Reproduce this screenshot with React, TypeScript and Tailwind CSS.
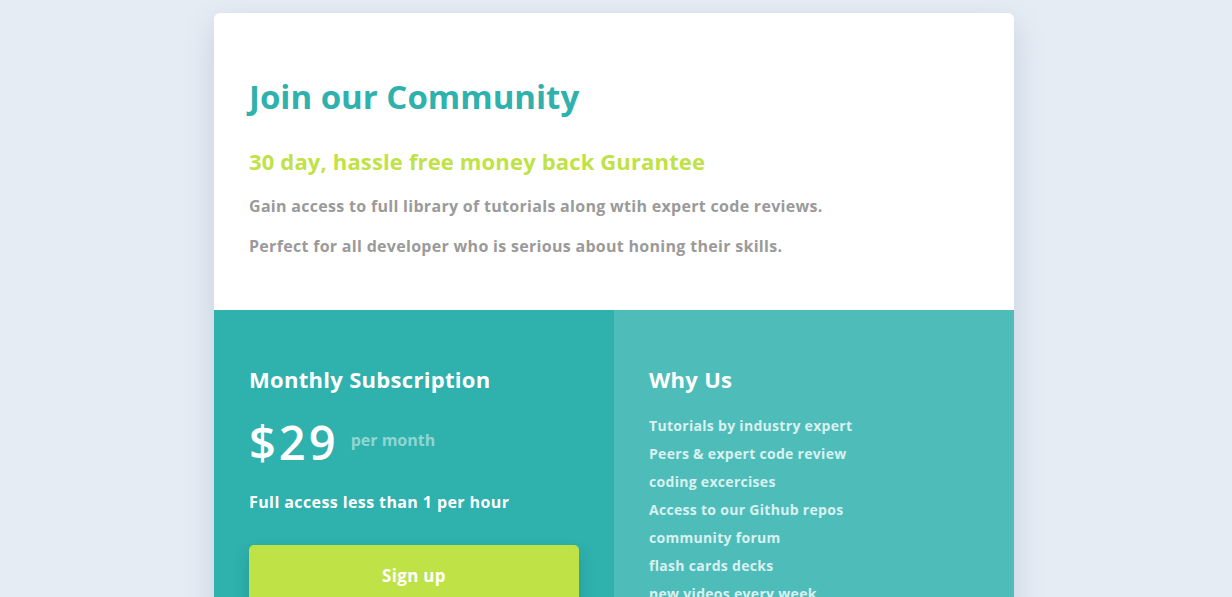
const features = [
  'Tutorials by industry expert',
  'Peers & expert code review',
  'coding excercises',
  'Access to our Github repos',
  'community forum',
  'flash cards decks',
  'new videos every week',
]

const App = (): JSX.Element => {
  return (
    <div className="min-h-screen bg-[#e5ecf4] flex justify-center pt-[13px] pr-[4px] font-['Open_Sans',sans-serif] font-bold">
      <div className="w-[800px] self-start bg-white rounded-[6px] overflow-hidden shadow-[0_10px_30px_rgba(60,90,130,0.18)]">
        <section className="h-[297px] px-[35px] pt-[64px]">
          <h1 className="text-[33px] leading-[40px] text-[#2fb1ad]">Join our Community</h1>
          <h2 className="mt-[29px] text-[22px] leading-[30px] text-[#bfe246] tracking-[0.15px]">
            30 day, hassle free money back Gurantee
          </h2>
          <p className="mt-[19px] text-[16px] leading-[22px] text-[#9a9a9a] tracking-[0.3px]">
            Gain access to full library of tutorials along wtih expert code reviews.
          </p>
          <p className="mt-[18px] text-[16px] leading-[22px] text-[#9a9a9a] tracking-[0.3px]">
            Perfect for all developer who is serious about honing their skills.
          </p>
        </section>
        <section className="grid grid-cols-2">
          <div className="bg-[#2fb1ad] px-[35px] pt-[54px] pb-[40px]">
            <h3 className="text-[22px] leading-[30px] text-white tracking-[0.3px]">Monthly Subscription</h3>
            <div className="mt-[20px] flex items-center gap-[12px]">
              <span className="text-[47px] leading-[56px] text-white font-semibold tracking-[3px]">$29</span>
              <span className="text-[16px] text-[#8fd6d3] pb-[4px]">per month</span>
            </div>
            <p className="mt-[20px] text-[16px] leading-[24px] text-white tracking-[0.4px]">Full access less than 1 per hour</p>
            <button className="mt-[31px] w-full h-[62px] rounded-[5px] bg-[#bfe246] text-white text-[17px] tracking-[0.3px] shadow-[0_8px_16px_rgba(0,60,60,0.2)]">
              Sign up
            </button>
          </div>
          <div className="bg-[#4ebdba] px-[35px] pt-[54px] pb-[40px]">
            <h3 className="text-[22px] leading-[30px] text-white tracking-[0.3px]">Why Us</h3>
            <ul className="mt-[18px] text-[14px] leading-[28px] text-[#d9f1f0] tracking-[0.3px]">
              {features.map((feature) => (
                <li key={feature}>{feature}</li>
              ))}
            </ul>
          </div>
        </section>
      </div>
    </div>
  )
}

export default App
